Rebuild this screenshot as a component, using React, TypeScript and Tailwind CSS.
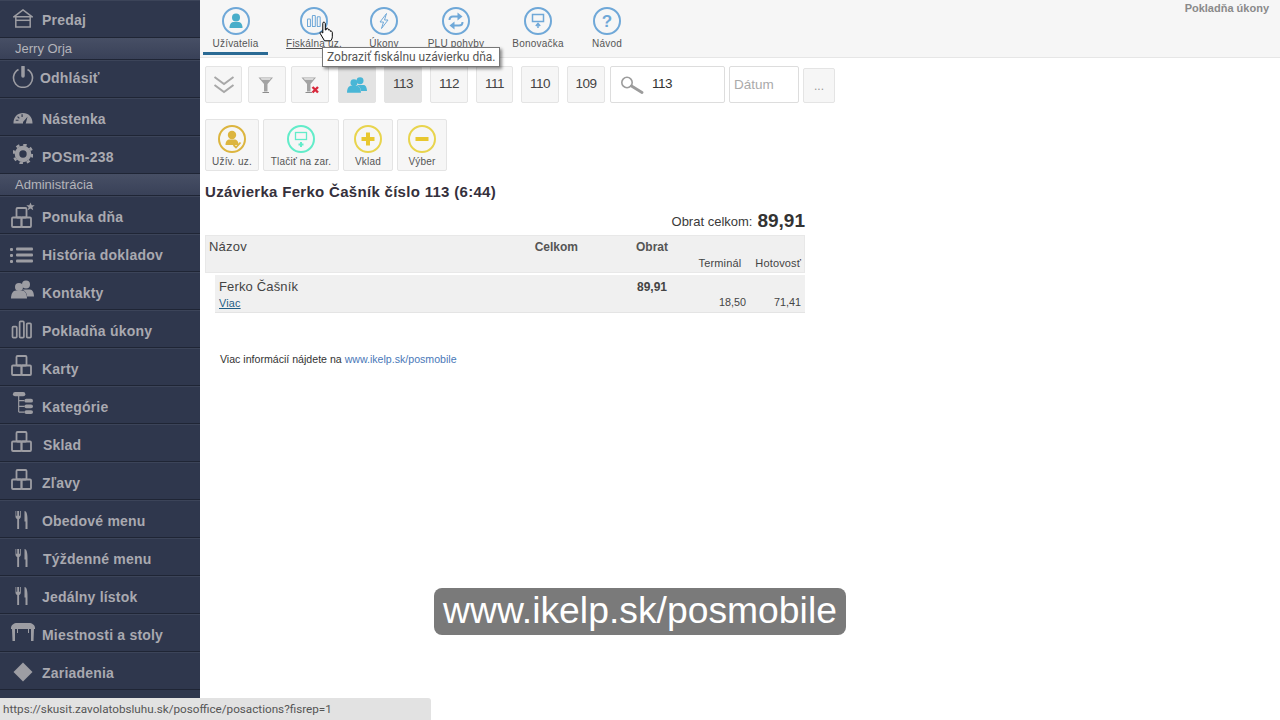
import React from "react";

const G = "#9d9da3";

function House() {
  return (
    <svg width="20" height="19" viewBox="0 0 20 19" fill="none" stroke={G} strokeWidth="1.5">
      <path d="M0.800 7.800 L10 0.900 L19.200 7.800 Z" />
      <path d="M2.800 8v10h14.400v-10" />
      <path d="M2.800 11.300h14.400" />
    </svg>
  );
}
function Power() {
  return (
    <svg width="22" height="22" viewBox="0 0 22 22" fill="none" stroke={G}>
      <path d="M6.500 3.500 A9.500 9.500 0 1 0 15.500 3.500" strokeWidth="1.600" />
      <path d="M11 1v9" strokeWidth="3.500" strokeLinecap="round" />
    </svg>
  );
}
function Gauge() {
  return (
    <svg width="20" height="12" viewBox="0 0 22 13">
      <path d="M0.500 12.500 C0.500 5 5 1 11 1 C17 1 21.500 5 21.500 12.500 L14 12.500 L16 5 L11 11 L11 12.500 Z" fill={G} />
      <path d="M5 5l2 2M10 2.500v3M3 9h3" stroke="#2f374d" strokeWidth="1.300" />
    </svg>
  );
}
function Gear() {
  return (
    <svg width="20" height="20" viewBox="0 0 20 20">
      <circle cx="10" cy="10" r="6" fill="none" stroke={G} strokeWidth="4.600" />
      <circle cx="10" cy="10" r="9.300" fill="none" stroke={G} strokeWidth="2.400" strokeDasharray="3.400 3.900" />
    </svg>
  );
}
function Boxes() {
  return (
    <svg width="21" height="21" viewBox="0 0 21 21" fill="none" stroke={G} strokeWidth="1.800">
      <rect x="5.500" y="1" width="10" height="9.500" rx="1" />
      <rect x="1" y="10.500" width="9.500" height="9.500" rx="1" />
      <rect x="10.500" y="10.500" width="9.500" height="9.500" rx="1" />
    </svg>
  );
}
function BoxesStar() {
  return (
    <svg width="24" height="26" viewBox="0 0 24 26" fill="none" stroke={G} strokeWidth="1.800">
      <rect x="5.500" y="6" width="10" height="9.500" rx="1" />
      <rect x="1" y="15.500" width="9.500" height="9.500" rx="1" />
      <rect x="10.500" y="15.500" width="9.500" height="9.500" rx="1" />
      <path d="M19.500 0.500l1.200 2.800h3l-2.300 1.900 .9 3-2.800-1.800-2.800 1.800 .9-3-2.300-1.900h3z" fill={G} stroke="none" />
    </svg>
  );
}
function ListIcon() {
  return (
    <svg width="23" height="16" viewBox="0 0 23 16" fill={G}>
      <rect x="0" y="1" width="3" height="3" rx="1" />
      <rect x="0" y="7" width="3" height="3" rx="1" />
      <rect x="0" y="13" width="3" height="3" rx="1" />
      <rect x="6" y="0.500" width="17" height="3" rx="1" />
      <rect x="6" y="6.500" width="17" height="3" rx="1" />
      <rect x="6" y="12.500" width="17" height="3" rx="1" />
    </svg>
  );
}
function People({ c = G, w = 23, h = 19 }: { c?: string; w?: number; h?: number }) {
  return (
    <svg width={w} height={h} viewBox="0 0 23 18" fill={c}>
      <circle cx="15" cy="4" r="4" />
      <path d="M11 9h8c2.500 0 4 3 4 7h-7c0-3-1.500-5.500-5-7z" />
      <circle cx="8" cy="6.500" r="4" />
      <path d="M0 18c0-5 2-8 5-8h6c3 0 5 3 5 8z" />
    </svg>
  );
}
function Bars({ c = G, w = 22, h = 19, sw = 1.800 }: { c?: string; w?: number; h?: number; sw?: number }) {
  return (
    <svg width={w} height={h} viewBox="0 0 22 20" fill="none" stroke={c} strokeWidth={sw}>
      <rect x="1" y="7" width="4.500" height="11.500" rx="1" />
      <rect x="8.500" y="1.500" width="4.500" height="17" rx="1" />
      <rect x="16" y="3.500" width="4.500" height="15" rx="1" />
    </svg>
  );
}
function Tree() {
  return (
    <svg width="21" height="23" viewBox="0 0 22 24" fill="none">
      <rect x="1" y="0" width="13" height="4.500" rx="2.200" fill={G} />
      <path d="M7 4v17M7 9h6M7 15h6M7 21h6" stroke={G} strokeWidth="1.200" />
      <rect x="13" y="7" width="9" height="4" rx="2" fill={G} />
      <rect x="13" y="13" width="9" height="4" rx="2" fill={G} />
      <rect x="13" y="19" width="9" height="4" rx="2" fill={G} />
    </svg>
  );
}
function Fork() {
  return (
    <svg width="13" height="18" viewBox="0 0 13 18" fill={G}>
      <path d="M0.500 0v5.500c0 1.300.8 2.200 1.700 2.500V18h1.900V8c.9-.3 1.700-1.200 1.700-2.500V0H5v4.800H4.100V0H2.200v4.800h-.9V0z" />
      <path d="M9.500 0C11.500 0 12.500 3 12.500 9.500V18h-2v-7.500H9.500z" />
    </svg>
  );
}
function Table() {
  return (
    <svg width="24" height="18" viewBox="0 0 24 18" fill={G}>
      <path d="M0 5C0 2 3 0 6 0h12c3 0 6 2 6 5v1H0z" />
      <path d="M1 6h3v12H1.500zM20 6h3l-.5 12H20zM6 6h1v4H6zM17 6h1v4h-1z" />
    </svg>
  );
}
function Diamond() {
  return (
    <svg width="20" height="20" viewBox="0 0 20 20" fill={G}>
      <path d="M10 0.500 L19.500 10 L10 19.500 L0.500 10 Z" />
    </svg>
  );
}

function NavRow({ icon, label, iconCls, textCls }: { icon: React.ReactNode; label: string; iconCls: string; textCls: string }) {
  return (
    <div className="h-[38px] flex items-center border-b border-b-[#1f2535] border-t border-t-[#3c4459] relative">
      <div className={"w-[42px] shrink-0 flex justify-center " + iconCls}>{icon}</div>
      <span className={"text-[14px] font-bold tracking-[0.2px] text-[#a9a9b0] whitespace-nowrap " + textCls}>{label}</span>
    </div>
  );
}
function Band({ label }: { label: string }) {
  return (
    <div className="h-[22px] flex items-center pl-[15px] bg-gradient-to-b from-[#474f65] to-[#394158] border-b border-b-[#1f2535] text-[13px] text-[#b4b4ba] leading-none">
      {label}
    </div>
  );
}

function Sidebar() {
  return (
    <aside className="w-[200px] shrink-0 h-[720px] overflow-hidden bg-[#2f374d] font-['Liberation_Sans',sans-serif]">
      <NavRow icon={<House />} label="Predaj" iconCls="pl-[4px] -mt-[1px]" textCls="mt-[3px]" />
      <Band label="Jerry Orja" />
      <NavRow icon={<Power />} label="Odhlásiť" iconCls="pl-[3px] -mt-[4px]" textCls="-ml-[2px] -mt-[1px]" />
      <NavRow icon={<Gauge />} label="Nástenka" iconCls="pl-[4px] mt-[1px]" textCls="mt-[5px]" />
      <NavRow icon={<Gear />} label="POSm-238" iconCls="pl-[4px] -mt-[2px]" textCls="mt-[5px]" />
      <Band label="Administrácia" />
      <NavRow icon={<BoxesStar />} label="Ponuka dňa" iconCls="pl-[3px]" textCls="mt-[5px]" />
      <NavRow icon={<ListIcon />} label="História dokladov" iconCls="mt-[4px]" textCls="mt-[5px]" />
      <NavRow icon={<People />} label="Kontakty" iconCls="pl-[2px] -mt-[3px]" textCls="mt-[5px]" />
      <NavRow icon={<Bars />} label="Pokladňa úkony" iconCls="pl-[2px]" textCls="mt-[5px]" />
      <NavRow icon={<Boxes />} label="Karty" iconCls="-mt-[4px]" textCls="mt-[5px]" />
      <NavRow icon={<Tree />} label="Kategórie" iconCls="pl-[3px] -mt-[3px]" textCls="mt-[5px]" />
      <NavRow icon={<Boxes />} label="Sklad" iconCls="-mt-[3px]" textCls="mt-[5px] ml-[1px]" />
      <NavRow icon={<Boxes />} label="Zľavy" iconCls="-mt-[3px]" textCls="mt-[5px]" />
      <NavRow icon={<Fork />} label="Obedové menu" iconCls="mt-[1px]" textCls="mt-[5px]" />
      <NavRow icon={<Fork />} label="Týždenné menu" iconCls="mt-[1px]" textCls="mt-[5px] ml-[1px]" />
      <NavRow icon={<Fork />} label="Jedálny lístok" iconCls="mt-[1px]" textCls="mt-[5px]" />
      <NavRow icon={<Table />} label="Miestnosti a stoly" iconCls="pl-[4px] -mt-[2px]" textCls="mt-[5px]" />
      <NavRow icon={<Diamond />} label="Zariadenia" iconCls="pl-[4px] mt-[2px]" textCls="mt-[5px]" />
    </aside>
  );
}

function Ring({ c, size = 28, sw = 2, children }: { c: string; size?: number; sw?: number; children?: React.ReactNode }) {
  return (
    <svg width={size} height={size} viewBox="0 0 28 28" fill="none">
      <circle cx="14" cy="14" r="13" stroke={c} strokeWidth={sw} />
      {children}
    </svg>
  );
}

const BLUE = "#6fa8d8";

function Tab({ label, w, ml, icon, active, hover }: { label: string; w: string; ml: string; icon: React.ReactNode; active?: boolean; hover?: boolean }) {
  return (
    <div className={"h-[55px] flex flex-col items-center pt-[7px] border-b-[3px] " + w + " " + ml + " " + (active ? "border-b-[#2a6a94]" : "border-b-transparent")}>
      {icon}
      <span className={"mt-[3px] text-[10px] tracking-[0.2px] leading-[12px] text-[#555] whitespace-nowrap " + (hover ? "underline" : "")}>{label}</span>
    </div>
  );
}

function TB({ w, ml, active, children }: { w: string; ml: string; active?: boolean; children: React.ReactNode }) {
  return (
    <div className={"h-[37px] shrink-0 flex items-center justify-center rounded-[2px] border text-[13.5px] tracking-[-0.5px] text-[#444] " + w + " " + ml + " " + (active ? "bg-[#e3e3e3] border-[#e3e3e3]" : "bg-[#f6f6f6] border-[#e4e4e4]")}>
      {children}
    </div>
  );
}

function Funnel({ x }: { x?: boolean }) {
  return (
    <svg width="20" height="18" viewBox="0 0 20 18">
      <path d="M1.500 1.500h14.500l-5.500 6.500v7.500h-3.500V8z" fill="#a3a3a3" />
      <path d="M3.500 2.300h10.500L12.800 3.800H4.800z" fill="#e9e9e9" />
      <path d="M5.500 16h6.500v1H5.500z" fill="#8c8c8c" />
      {x && <path d="M12.500 11l5.500 5.500M18 11l-5.500 5.500" stroke="#d8283c" strokeWidth="2.400" />}
    </svg>
  );
}

function AB({ w, ml, label, icon }: { w: string; ml: string; label: string; icon: React.ReactNode }) {
  return (
    <div className={"h-[52px] shrink-0 flex flex-col items-center pt-[5px] rounded-[2px] border border-[#e4e4e4] bg-[#f6f6f6] " + w + " " + ml}>
      {icon}
      <span className="mt-[3px] text-[10px] tracking-[0.2px] leading-[12px] text-[#555] whitespace-nowrap">{label}</span>
    </div>
  );
}

export default function App() {
  return (
    <div className="relative w-[1280px] h-[720px] overflow-hidden bg-white flex font-['Liberation_Sans',sans-serif]">
      <Sidebar />
      <main className="flex-1 min-w-0">
        <header className="h-[58px] bg-[#f6f6f6] border-b border-[#e6e6e6] flex items-start pl-[3px] relative">
          <Tab label="Užívatelia" w="w-[65px]" ml="" active icon={
            <Ring c={BLUE}>
              <circle cx="14" cy="10.500" r="4" fill="#49aeca" />
              <path d="M7.500 21c0-4 2-6 4-6h5c2 0 4 2 4 6z" fill="#49aeca" />
            </Ring>} />
          <Tab label="Fiskálna uz." w="w-[66px]" ml="ml-[13px]" hover icon={
            <Ring c={BLUE}><g transform="translate(6.500 7.500)"><Bars c={BLUE} w={15} h={13} sw={1.600} /></g></Ring>} />
          <Tab label="Úkony" w="w-[48px]" ml="ml-[13px]" icon={
            <Ring c={BLUE}><path d="M16.500 6.500L10 15h3.500l-2 6.500L18 13h-3.500z" stroke={BLUE} strokeWidth="1" /></Ring>} />
          <Tab label="PLU pohyby" w="w-[72px]" ml="ml-[12px]" icon={
            <Ring c={BLUE}>
              <path d="M7.500 13c0-2.500 1.500-3.500 3.500-3.500h5" stroke={BLUE} strokeWidth="2" />
              <path d="M15.500 5.500l5 4-5 4z" fill={BLUE} />
              <path d="M20.500 15c0 2.500-1.500 3.500-3.500 3.500h-5" stroke={BLUE} strokeWidth="2" />
              <path d="M12.500 14.500l-5 4 5 4z" fill={BLUE} />
            </Ring>} />
          <Tab label="Bonovačka" w="w-[60px]" ml="ml-[16px]" icon={
            <Ring c={BLUE}>
              <rect x="8.500" y="7.500" width="11" height="7" stroke={BLUE} strokeWidth="1.500" />
              <path d="M14 21v-4M11.800 19l2.200-2.500 2.200 2.500" stroke={BLUE} strokeWidth="1.500" />
            </Ring>} />
          <Tab label="Návod" w="w-[40px]" ml="ml-[19px]" icon={
            <Ring c={BLUE}>
              <text x="14" y="20" textAnchor="middle" fontSize="17" fontWeight="700" fill={BLUE} fontFamily="Liberation Sans">?</text>
            </Ring>} />
          <span className="ml-auto mr-[11px] mt-[1px] text-[11px] font-bold leading-[14px] text-[#8a8a8a]">Pokladňa úkony</span>
        </header>

        <div className="flex items-start mt-[8px] pl-[5px]">
          <TB w="w-[37px]" ml="">
            <svg width="22" height="22" viewBox="0 0 22 22" fill="none" stroke="#a8a8a8" strokeWidth="2"><path d="M1.500 3l9.500 7 9.500-7M1.500 11l9.500 7 9.500-7" /></svg>
          </TB>
          <TB w="w-[38px]" ml="ml-[6px]"><Funnel /></TB>
          <TB w="w-[38px]" ml="ml-[5px]"><Funnel x /></TB>
          <TB w="w-[38px]" ml="ml-[9px]" active><People c="#49b6d6" w={20} h={16} /></TB>
          <TB w="w-[38px]" ml="ml-[8px]" active>113</TB>
          <TB w="w-[38px]" ml="ml-[8px]">112</TB>
          <TB w="w-[37px]" ml="ml-[8px]">111</TB>
          <TB w="w-[38px]" ml="ml-[8px]">110</TB>
          <TB w="w-[38px]" ml="ml-[8px]">109</TB>
          <div className="w-[115px] h-[37px] ml-[5px] shrink-0 flex items-center border border-[#ddd] rounded-[2px] bg-white pl-[9px]">
            <svg width="24" height="18" viewBox="0 0 24 18" fill="none">
              <circle cx="7" cy="6.500" r="5.200" stroke="#9c9c9c" strokeWidth="1.600" />
              <path d="M11.500 10l10.500 6.500" stroke="#9c9c9c" strokeWidth="2.800" strokeLinecap="round" />
            </svg>
            <span className="ml-[8px] text-[13.5px] tracking-[-0.5px] text-[#333]">113</span>
          </div>
          <div className="w-[70px] h-[37px] ml-[4px] shrink-0 flex items-center border border-[#ddd] rounded-[2px] bg-white pl-[4px] pt-[1px] text-[13.5px] text-[#aaa]">Dátum</div>
          <div className="w-[32px] h-[35px] ml-[4px] mt-[2px] shrink-0 flex items-center justify-center border border-[#e4e4e4] rounded-[2px] bg-[#f6f6f6] text-[12px] text-[#999]">...</div>
        </div>

        <div className="flex mt-[16px] pl-[5px]">
          <AB w="w-[54px]" ml="" label="Užív. uz." icon={
            <Ring c="#dcb53f">
              <circle cx="14" cy="10" r="4.200" fill="#dcb53f" />
              <path d="M7.500 20c0-4 2-5.500 4-5.500h5c2 0 4 1.500 4 5.500z" fill="#dcb53f" />
              <path d="M15.500 20l2.500 2.500 4.500-5" stroke="#dcb53f" strokeWidth="1.800" />
            </Ring>} />
          <AB w="w-[76px]" ml="ml-[4px]" label="Tlačiť na zar." icon={
            <Ring c="#62ecc9">
              <rect x="8.500" y="7.500" width="11" height="7" stroke="#62ecc9" strokeWidth="1.300" />
              <path d="M14 17v5M11.500 19.500h5" stroke="#62ecc9" strokeWidth="2" />
            </Ring>} />
          <AB w="w-[50px]" ml="ml-[4px]" label="Vklad" icon={
            <Ring c="#e8d44d">
              <path d="M14 7.500v13M7.500 14h13" stroke="#e8c72f" strokeWidth="4" />
            </Ring>} />
          <AB w="w-[50px]" ml="ml-[4px]" label="Výber" icon={
            <Ring c="#e8d44d">
              <path d="M7.500 14h13" stroke="#e8c72f" strokeWidth="4" />
            </Ring>} />
        </div>

        <h1 className="mt-[12px] ml-[5px] text-[15px] font-bold tracking-[0.3px] leading-[18px] text-[#35303c]">Uzávierka Ferko Čašník číslo 113 (6:44)</h1>

        <div className="w-[600px] ml-[5px] mt-[6px] h-[27px] flex items-center justify-end text-[#3a3a3a]">
          <span className="text-[13px] leading-[20px] mt-[3px]">Obrat celkom:</span>
          <span className="ml-[5px] text-[19px] font-bold leading-[20px] text-[#333]">89,91</span>
        </div>

        <div className="w-[600px] ml-[5px] mt-[1px] h-[38px] bg-[#f0f0f0] border border-[#e8e8e8] relative text-[#444]">
          <div className="flex pt-[3px] h-[20px] leading-[16px]">
            <span className="pl-[3px] w-[372px] flex justify-between text-[13px] tracking-[0.2px]">
              Názov<span className="text-[12px] font-bold text-[#555] tracking-normal">Celkom</span>
            </span>
            <span className="w-[90px] text-right text-[12px] font-bold text-[#555]">Obrat</span>
          </div>
          <div className="flex justify-end pr-[3px] text-[11px] tracking-[0.15px] leading-[14px]">
            <span>Terminál</span>
            <span className="ml-[14px]">Hotovosť</span>
          </div>
        </div>

        <div className="w-[590px] ml-[15px] mt-[2px] h-[38px] bg-[#f0f0f0] border-b border-[#e4e4e4] text-[#444]">
          <div className="flex pt-[3px] h-[20px] leading-[18px]">
            <span className="pl-[4px] w-[362px] text-[13px] tracking-[0.15px]">Ferko Čašník</span>
            <span className="w-[90px] text-right text-[12px] font-bold">89,91</span>
          </div>
          <div className="flex items-start pl-[4px] pr-[4px] text-[10.8px] leading-[14px]">
            <a className="text-[#1f5d86] underline mt-[1px] tracking-[0.2px]">Viac</a>
            <span className="ml-auto">18,50</span>
            <span className="ml-[28px]">71,41</span>
          </div>
        </div>

        <p className="mt-[39px] ml-[20px] text-[10.6px] leading-[14px] text-[#333]">
          Viac informácií nájdete na <span className="text-[#4a78b8]">www.ikelp.sk/posmobile</span>
        </p>
      </main>

      {/* cursor */}
      <svg className="absolute left-[319px] top-[21px]" width="16" height="22" viewBox="0 0 16 22">
        <path d="M4 1.500c1-.8 2.300 0 2.300 1.200V9l1-.3V7.500c1-.6 2 0 2 .8v.7c1-.6 2-.1 2 .8v.5c1-.4 2 .1 2 1v4.500c0 1.500-.8 3-1.500 4H5.500L1.500 13c-.8-1-.3-2.200 1-2l1.300 1V2.700c0-.5 0-1 .2-1.200z" fill="#fff" stroke="#000" strokeWidth="1" />
      </svg>

      {/* tooltip */}
      <div className="absolute left-[322px] top-[47px] h-[20px] w-[178px] bg-white border border-[#777] shadow-[2px_2px_3px_rgba(0,0,0,0.45)] text-[12px] leading-[18px] pl-[4px] text-[#555] font-['Roboto',sans-serif] whitespace-nowrap">
        Zobraziť fiskálnu uzávierku dňa.
      </div>

      {/* watermark */}
      <div className="absolute left-[434px] top-[588px] w-[412px] h-[47px] rounded-[8px] bg-[#7a7a7a] text-white text-[37.3px] leading-[44px] text-center whitespace-nowrap">
        www.ikelp.sk/posmobile
      </div>

      {/* status bar */}
      <div className="absolute left-0 top-[698px] w-[431px] h-[22px] bg-[#e2e2e2] rounded-tr-[3px] text-[11.7px] leading-[22px] pl-[3px] text-[#555] font-['Roboto',sans-serif]">
        https://skusit.zavolatobsluhu.sk/posoffice/posactions?fisrep=1
      </div>
    </div>
  );
}
